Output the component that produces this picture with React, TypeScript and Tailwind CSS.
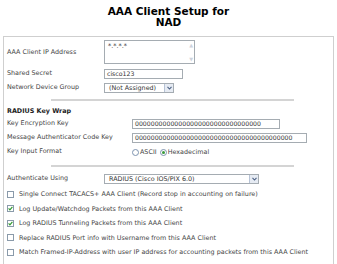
import React from "react";

const FONT = { fontFamily: '"DejaVu Sans", Verdana, sans-serif' };

function Arrow() {
  return (
    <span className="flex h-full w-[9px] items-center justify-center border-l border-[#b7c3d6] bg-[#e6ebf3]">
      <svg width="5" height="4" viewBox="0 0 5 4">
        <path d="M0.5 0.8 L2.5 3 L4.5 0.8" fill="none" stroke="#4d6185" strokeWidth="1.1" />
      </svg>
    </span>
  );
}

function Select({ value, width }: { value: string; width: string }) {
  return (
    <div className={`flex h-[10px] items-center justify-between border border-[#a5acb2] bg-white text-[#333] ${width}`}>
      <span className="pl-[4px] leading-none">{value}</span>
      <Arrow />
    </div>
  );
}

function Input({ value, width }: { value: string; width: string }) {
  return (
    <div className={`flex h-[10px] items-center border border-[#a5acb2] bg-white pl-[2px] text-[6.2px] leading-none text-[#333] ${width}`}>
      {value}
    </div>
  );
}

function Check({ checked, label }: { checked?: boolean; label: string }) {
  return (
    <div className="flex h-[14.5px] items-center gap-[5px]">
      <span className="flex h-[7px] w-[7px] items-center justify-center border border-[#8a9aaa] bg-white">
        {checked && (
          <svg width="5" height="5" viewBox="0 0 5 5">
            <path d="M0.6 2.4 L1.9 3.8 L4.4 0.9" fill="none" stroke="#2f9a2f" strokeWidth="1.2" />
          </svg>
        )}
      </span>
      <span className="leading-none">{label}</span>
    </div>
  );
}

function Radio({ checked }: { checked?: boolean }) {
  return (
    <span className="flex h-[7px] w-[7px] items-center justify-center rounded-full border border-[#7d93b0] bg-white">
      {checked && <span className="h-[3px] w-[3px] rounded-full bg-[#3a9a3a]" />}
    </span>
  );
}

function Rule({ h }: { h: string }) {
  return (
    <div className={`flex items-center pl-[44px] ${h}`}>
      <div className="h-[2px] w-[243px] bg-[#d4d4d4]" />
    </div>
  );
}

export default function App() {
  return (
    <div className="h-[264px] w-[337px] overflow-hidden bg-white text-[#454545]" style={FONT}>
      <div className="flex h-[36px] flex-col items-center pt-[6px] text-[10.5px] font-bold leading-[10.5px] text-black">
        <span>AAA Client Setup for</span>
        <span>NAD</span>
      </div>

      <div className="ml-[3px] h-[240px] w-[331px] border border-b-0 border-[#cfcfcf] pl-[3px] text-[6.4px]">
        <div className="flex h-[29px] items-center">
          <span className="w-[97px] pt-[2px]">AAA Client IP Address</span>
          <div className="flex h-[24px] w-[91px] justify-between border border-[#a5acb2] bg-white pl-[3px] pt-[2px] pr-[1px] text-[#333]">
            <span className="leading-none">*.*.*.*</span>
            <div className="flex flex-col justify-between pb-[1px] text-[5px] leading-none text-[#cdd3dc]">
              <span>▲</span>
              <span>▼</span>
            </div>
          </div>
        </div>
        <div className="flex h-[16px] items-center">
          <span className="w-[97px]">Shared Secret</span>
          <Input value="cisco123" width="w-[79px]" />
        </div>
        <div className="flex h-[12px] items-center">
          <span className="w-[97px]">Network Device Group</span>
          <Select value="(Not Assigned)" width="w-[70px]" />
        </div>

        <Rule h="h-[12px]" />

        <div className="flex h-[11px] items-center font-bold text-[#222]">RADIUS Key Wrap</div>
        <div className="flex h-[14px] items-center">
          <span className="w-[125px]">Key Encryption Key</span>
          <Input value="00000000000000000000000000000000" width="w-[148px]" />
        </div>
        <div className="flex h-[14px] items-center">
          <span className="w-[125px]">Message Authenticator Code Key</span>
          <Input value="0000000000000000000000000000000000000000" width="w-[175px]" />
        </div>
        <div className="flex h-[14px] items-center">
          <span className="w-[125px]">Key Input Format</span>
          <div className="flex items-center gap-[1px] leading-none">
            <Radio />
            <span className="mr-[2px]">ASCII</span>
            <Radio checked />
            <span>Hexadecimal</span>
          </div>
        </div>

        <Rule h="h-[14px]" />

        <div className="flex h-[12px] items-center">
          <span className="w-[97px]">Authenticate Using</span>
          <Select value="RADIUS (Cisco IOS/PIX 6.0)" width="w-[155px]" />
        </div>

        <div className="pt-[2px]">
          <Check label="Single Connect TACACS+ AAA Client (Record stop in accounting on failure)" />
          <Check checked label="Log Update/Watchdog Packets from this AAA Client" />
          <Check checked label="Log RADIUS Tunneling Packets from this AAA Client" />
          <Check label="Replace RADIUS Port info with Username from this AAA Client" />
          <Check label="Match Framed-IP-Address with user IP address for accounting packets from this AAA Client" />
        </div>
      </div>
    </div>
  );
}
